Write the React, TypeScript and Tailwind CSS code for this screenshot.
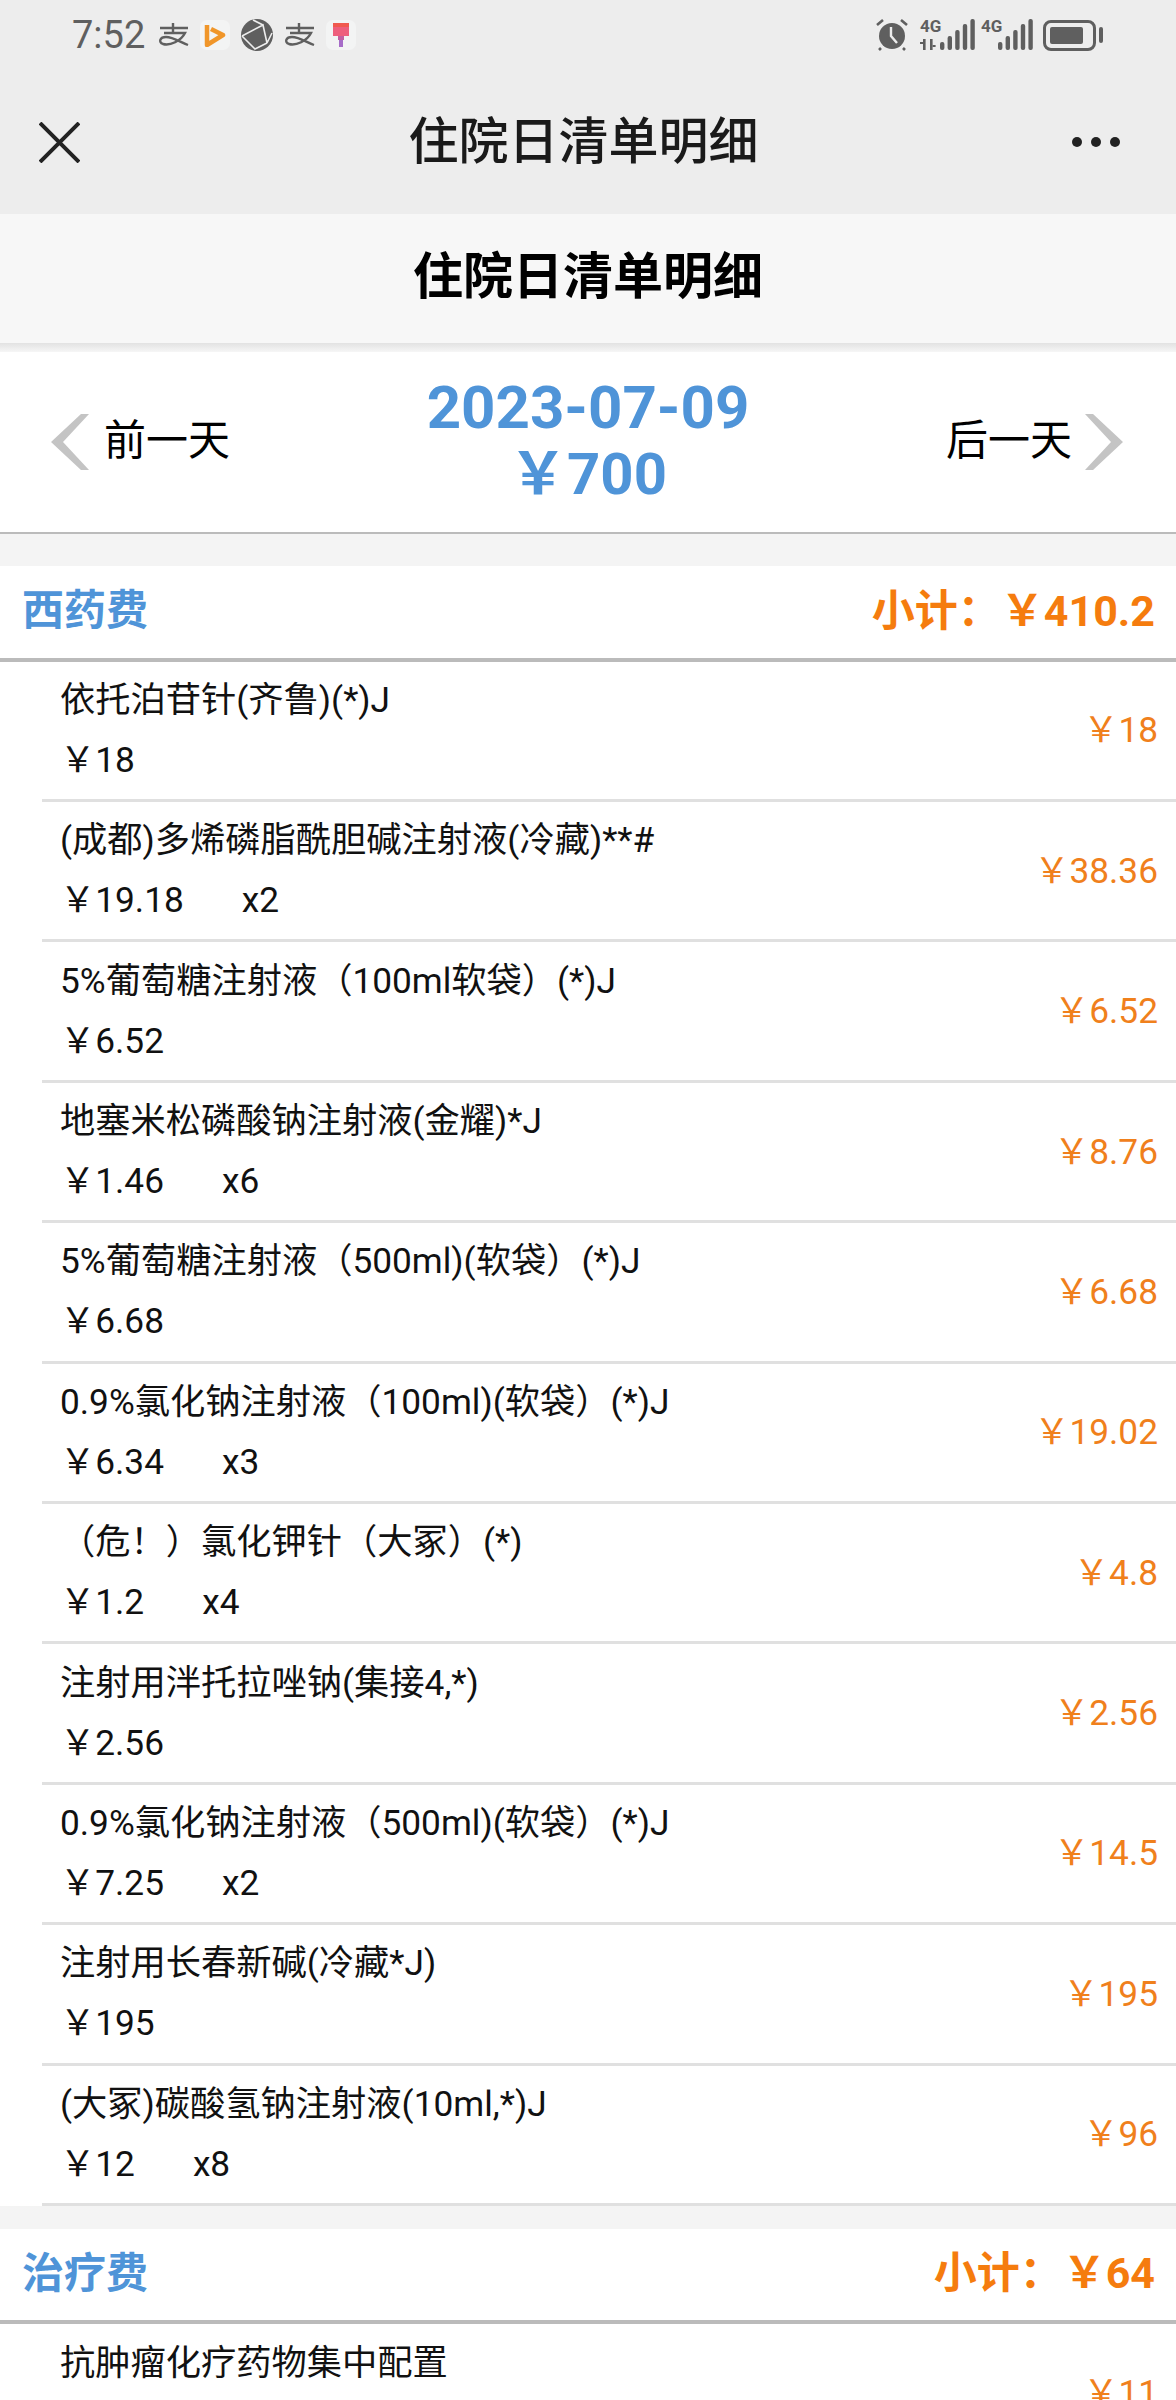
const font = '[font-family:Roboto,"Noto_Sans_CJK_SC",sans-serif]';

type Item = { name: string; unit: string; qty?: string; total: string };

const drugs: Item[] = [
  { name: "依托泊苷针(齐鲁)(*)J", unit: "18", total: "18" },
  { name: "(成都)多烯磷脂酰胆碱注射液(冷藏)**#", unit: "19.18", qty: "x2", total: "38.36" },
  { name: "5%葡萄糖注射液（100ml软袋）(*)J", unit: "6.52", total: "6.52" },
  { name: "地塞米松磷酸钠注射液(金耀)*J", unit: "1.46", qty: "x6", total: "8.76" },
  { name: "5%葡萄糖注射液（500ml)(软袋）(*)J", unit: "6.68", total: "6.68" },
  { name: "0.9%氯化钠注射液（100ml)(软袋）(*)J", unit: "6.34", qty: "x3", total: "19.02" },
  { name: "（危！）氯化钾针（大冢）(*)", unit: "1.2", qty: "x4", total: "4.8" },
  { name: "注射用泮托拉唑钠(集接4,*)", unit: "2.56", total: "2.56" },
  { name: "0.9%氯化钠注射液（500ml)(软袋）(*)J", unit: "7.25", qty: "x2", total: "14.5" },
  { name: "注射用长春新碱(冷藏*J)", unit: "195", total: "195" },
  { name: "(大冢)碳酸氢钠注射液(10ml,*)J", unit: "12", qty: "x8", total: "96" },
];

function Row({ item }: { item: Item }) {
  return (
    <div className="ml-[42px] h-[140.4px] flex items-center justify-between border-b-[3px] border-[#e0e0e0] pl-[18px] pr-[18px] text-[35.25px]">
      <div className="leading-[60px] text-[#111] -mt-[1px]">
        <div className="whitespace-nowrap">{item.name}</div>
        <div className="flex">
          <span>￥{item.unit}</span>
          {item.qty && <span className="ml-[58px]">{item.qty}</span>}
        </div>
      </div>
      <div className="text-[#f0801c] mt-[1px]">￥{item.total}</div>
    </div>
  );
}

function SectionHead({ title, sum }: { title: string; sum: string }) {
  return (
    <div className="h-[95.6px] flex items-center justify-between bg-white pl-[22px] pr-[21px] border-b-[4px] border-[#bbbbbb] font-bold text-[42px]">
      <span className="text-[#4f94d8] -mt-[2px]">{title}</span>
      <span className="text-[#f57c0e] text-[43px] -mt-[2px]">小计：￥{sum}</span>
    </div>
  );
}

function Alipay() {
  return (
    <svg width="32" height="24" viewBox="0 0 32 24" fill="none" stroke="#5f5f5f" strokeWidth="2.4">
      <path d="M2 5H30M15 0V10M6 10H27C23 18 12 23 5 21C0 19 2 14 8 14C15 14 22 19 30 22" />
    </svg>
  );
}

function Tile({ children }: { children: React.ReactNode }) {
  return <div className="w-[30px] h-[30px] rounded-[7px] bg-[#f3f4f4] flex items-center justify-center">{children}</div>;
}

function Bars({ count }: { count: number }) {
  const hs = [8, 14, 20, 26, 31];
  return (
    <svg width="36" height="32" viewBox="0 0 36 32" fill="#5f5f5f">
      {hs.slice(0, count).map((h, i) => (
        <rect key={i} x={i * 7.6} y={31 - h} width="4.4" height={h} rx="2" />
      ))}
    </svg>
  );
}

function StatusBar() {
  return (
    <div className="h-[70px] flex items-center justify-between pl-[72px] pr-[73px] text-[#5f5f5f]">
      <div className="flex items-center">
        <span className="text-[38px] leading-[36px] w-[86px] [font-family:Roboto,sans-serif]">7:52</span>
        <Alipay />
        <div className="ml-[10px]">
          <Tile>
            <svg width="22" height="24" viewBox="0 0 22 24" fill="none" stroke="#f0962a" strokeWidth="4.5">
              <path d="M3 2V22L19 12L7 6" strokeLinejoin="round" />
            </svg>
          </Tile>
        </div>
        <svg className="ml-[11px]" width="32" height="32" viewBox="0 0 32 32">
          <circle cx="16" cy="16" r="16" fill="#5f5f5f" />
          <path d="M1 17L22 6L26 24M22 6L12 1M1 17L14 30L26 24M26 24L31 14" fill="none" stroke="#ededed" strokeWidth="1.6" />
        </svg>
        <div className="ml-[11px]">
          <Alipay />
        </div>
        <div className="ml-[10px]">
          <Tile>
            <svg width="16" height="24" viewBox="0 0 16 24">
              <rect x="0" y="0" width="16" height="4" fill="#f05a4f" />
              <rect x="0" y="4" width="16" height="9" fill="#ee5f7c" />
              <rect x="5" y="13" width="6" height="4" fill="#c45fa0" />
              <rect x="6" y="17" width="4" height="7" fill="#a66cc8" />
            </svg>
          </Tile>
        </div>
      </div>
      <div className="flex items-center">
        <svg width="32" height="32" viewBox="0 0 32 32">
          <circle cx="16" cy="17" r="13" fill="#5f5f5f" />
          <path d="M15 8V17L21 24" fill="none" stroke="#ededed" strokeWidth="2.4" />
          <path d="M1 6L7 1M31 6L25 1M5 29L3 31M27 29L29 31" fill="none" stroke="#5f5f5f" strokeWidth="2.6" />
        </svg>
        <div className="ml-[12px] relative w-[50px] h-[32px]">
          <span className="absolute left-0 top-0 text-[17px] leading-[15px] font-bold [font-family:Roboto,sans-serif]">4G</span>
          <svg className="absolute left-0 bottom-[1px]" width="22" height="11" viewBox="0 0 22 11" fill="#5f5f5f">
            <rect x="3" y="0" width="2.6" height="11" />
            <rect x="0" y="3" width="3" height="2" />
            <rect x="10" y="0" width="2.6" height="11" />
            <rect x="12.6" y="6" width="3" height="2" />
          </svg>
          <div className="absolute left-[20px] top-0">
            <Bars count={5} />
          </div>
        </div>
        <div className="ml-[11px] relative w-[51px] h-[32px]">
          <span className="absolute left-0 top-0 text-[17px] leading-[15px] font-bold [font-family:Roboto,sans-serif]">4G</span>
          <div className="absolute left-[17px] top-0">
            <Bars count={5} />
          </div>
        </div>
        <div className="ml-[11px] w-[53px] h-[31px] rounded-[8px] border-[3px] border-[#5f5f5f] p-[4px] flex">
          <div className="w-[33px] bg-[#5f5f5f] rounded-[2px]" />
        </div>
        <div className="ml-[3px] w-[4px] h-[16px] bg-[#5f5f5f] rounded-[2px]" />
      </div>
    </div>
  );
}

export default function App() {
  return (
    <div className={`w-[1176px] h-[2400px] overflow-hidden bg-white ${font}`}>
      <div className="h-[214px] bg-[#ededed]">
        <StatusBar />
        <div className="h-[144px] flex items-center justify-between pl-[39px] pr-[56px]">
          <svg width="41" height="41" viewBox="0 0 41 41" stroke="#222" strokeWidth="4">
            <path d="M1 1L40 40M40 1L1 40" />
          </svg>
          <span className="ml-[12px] text-[50px] text-[#1a1a1a] font-medium">住院日清单明细</span>
          <div className="flex gap-[9px] -ml-[3px]">
            <span className="w-[10px] h-[10px] rounded-full bg-[#222]" />
            <span className="w-[10px] h-[10px] rounded-full bg-[#222]" />
            <span className="w-[10px] h-[10px] rounded-full bg-[#222]" />
          </div>
        </div>
      </div>

      <div className="h-[129px] bg-[#f7f7f7] flex items-center justify-center text-[50px] font-bold text-black">
        <span className="-mt-[2px]">住院日清单明细</span>
      </div>
      <div className="h-[9px] bg-gradient-to-b from-[#e2e2e2] to-[#f6f6f6]" />

      <div className="h-[182px] grid grid-cols-3 items-center border-b-2 border-[#bbbbbb]">
        <div className="flex items-center pl-[51px]">
          <svg width="38" height="56" viewBox="0 0 38 56" fill="#c4c4c4">
            <path d="M38 0H30L0 28L30 56H38L12 28Z" />
          </svg>
          <span className="ml-[15px] -mt-[3px] text-[42px] text-black">前一天</span>
        </div>
        <div className="text-center font-bold text-[#4f94d8] text-[60px] leading-[66px] -mt-[2px]">
          <div>2023-07-09</div>
          <div className="text-[58px]">￥700</div>
        </div>
        <div className="flex items-center justify-end pr-[53px]">
          <span className="mr-[13px] -mt-[3px] text-[42px] text-black">后一天</span>
          <svg width="38" height="56" viewBox="0 0 38 56" fill="#c4c4c4">
            <path d="M0 0H8L38 28L8 56H0L26 28Z" />
          </svg>
        </div>
      </div>

      <div className="h-[32px] bg-[#f4f4f4]" />
      <SectionHead title="西药费" sum="410.2" />
      {drugs.map((d, i) => (
        <Row key={i} item={d} />
      ))}
      <div className="h-[23px] bg-[#f4f4f4]" />
      <SectionHead title="治疗费" sum="64" />
      <Row item={{ name: "抗肿瘤化疗药物集中配置", unit: "11", total: "11" }} />
    </div>
  );
}
